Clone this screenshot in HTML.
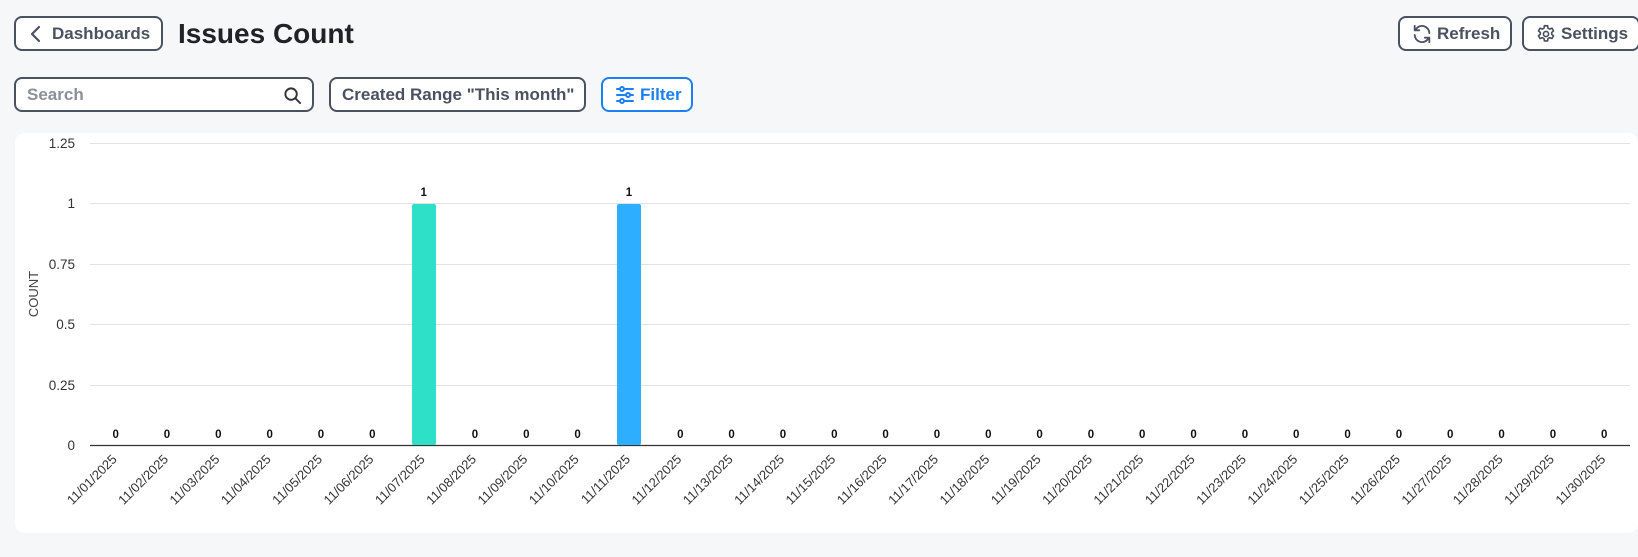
<!DOCTYPE html>
<html><head><meta charset="utf-8"><style>
*{box-sizing:border-box;margin:0;padding:0}
body{width:1638px;height:557px;background:#f6f7f9;font-family:"Liberation Sans",sans-serif;position:relative;overflow:hidden;color:#222}
.btn{position:absolute;height:35px;border:2px solid #4a5260;border-radius:8px;background:#fff;display:flex;align-items:center;font-weight:bold;font-size:17px;color:#4a5260}
h1{position:absolute;left:178px;top:18px;font-size:28px;font-weight:bold;color:#1f2328}
.card{position:absolute;left:15px;top:133px;width:1623px;height:400px;background:#fff;border-radius:10px}
</style></head><body>
<div class="btn" style="left:14px;top:16px;width:149px;padding-left:12px">
<svg width="16" height="18" viewBox="0 0 16 18"><path d="M11 2 L4 9 L11 16" fill="none" stroke="#4a5260" stroke-width="2.2" stroke-linecap="round" stroke-linejoin="round"/></svg>
<span style="margin-left:8px">Dashboards</span></div>
<h1>Issues Count</h1>
<div class="btn" style="left:1398px;top:16px;width:114px;padding-left:11px">
<svg width="22" height="22" viewBox="0 0 24 24" fill="none" stroke="#4a5260" stroke-width="2" stroke-linecap="round" stroke-linejoin="round"><path d="M20 11A8 8 0 0 0 5.5 6.5L4 8M4 3v5h5M4 13a8 8 0 0 0 14.5 4.5L20 16M20 21v-5h-5"/></svg>
<span style="margin-left:4px">Refresh</span></div>
<div class="btn" style="left:1522px;top:16px;width:118px;padding-left:11px">
<svg width="22" height="22" viewBox="0 0 24 24" fill="none" stroke="#4a5260" stroke-width="1.8" stroke-linejoin="round"><path d="M10.3 3h3.4l.5 2.6 1.8 1 2.5-.9 1.7 2.9-2 1.7v2l2 1.7-1.7 2.9-2.5-.9-1.8 1-.5 2.6h-3.4l-.5-2.6-1.8-1-2.5.9-1.7-2.9 2-1.7v-2l-2-1.7 1.7-2.9 2.5.9 1.8-1z"/><circle cx="12" cy="12" r="2.8"/></svg>
<span style="margin-left:4px">Settings</span></div>
<div class="btn" style="left:14px;top:77px;width:300px;padding-left:11px;font-weight:bold;color:#8a9099">Search
<svg style="position:absolute;right:10px;top:7px" width="19" height="19" viewBox="0 0 20 20" fill="none" stroke="#333" stroke-width="2" stroke-linecap="round"><circle cx="8.5" cy="8.5" r="6"/><path d="M13 13l5 5"/></svg></div>
<div class="btn" style="left:329px;top:77px;width:257px;padding-left:11px">Created Range "This month"</div>
<div class="btn" style="left:601px;top:77px;width:92px;padding-left:12px;border-color:#1a80f5;color:#1a80f5">
<svg width="20" height="18" viewBox="0 0 20 18" fill="none" stroke="#1a80f5" stroke-width="2" stroke-linecap="round"><path d="M2 3h16M2 9h16M2 15h16"/><circle cx="7" cy="3" r="2" fill="#fff"/><circle cx="13" cy="9" r="2" fill="#fff"/><circle cx="7" cy="15" r="2" fill="#fff"/></svg>
<span style="margin-left:5px">Filter</span></div>
<div class="card"></div>
<svg style="position:absolute;left:0;top:0" width="1638" height="557" font-family="Liberation Sans, sans-serif">
<g stroke="#e3e3e3" stroke-width="1">
<line x1="90" y1="143.5" x2="1630" y2="143.5"/><line x1="90" y1="203.5" x2="1630" y2="203.5"/><line x1="90" y1="264.5" x2="1630" y2="264.5"/><line x1="90" y1="324.5" x2="1630" y2="324.5"/><line x1="90" y1="385.5" x2="1630" y2="385.5"/>
</g>
<line x1="90" y1="445.5" x2="1630" y2="445.5" stroke="#333" stroke-width="1.3"/>
<g font-size="13.5" fill="#333" text-anchor="end">
<text x="75" y="148">1.25</text><text x="75" y="208">1</text><text x="75" y="269">0.75</text><text x="75" y="329">0.5</text><text x="75" y="390">0.25</text><text x="75" y="450">0</text>
</g>
<text transform="translate(38,294) rotate(-90)" font-size="13" fill="#444" text-anchor="middle">COUNT</text>
<rect x="412" y="204" width="24" height="241" rx="2" fill="#2ee0c8"/>
<rect x="617" y="204" width="24" height="241" rx="2" fill="#2eaeff"/>
<g id="vals" font-size="11.5" font-weight="bold" fill="#111" text-anchor="middle"></g>
<g id="labs" font-size="13" fill="#333" text-anchor="end"></g>
</svg>
<script>
var v=document.getElementById('vals'),l=document.getElementById('labs'),ns='http://www.w3.org/2000/svg';
for(var i=0;i<30;i++){var cx=90+(i+0.5)*51.33;var one=(i==6||i==10);
var t=document.createElementNS(ns,'text');t.setAttribute('x',cx);t.setAttribute('y',one?196:438);t.textContent=one?'1':'0';v.appendChild(t);
var d=document.createElementNS(ns,'text');var x=cx+2,y=460;d.setAttribute('transform','translate('+x+','+y+') rotate(-45)');d.textContent='11/'+(i<9?'0':'')+(i+1)+'/2025';l.appendChild(d);}
</script>
</body></html>
